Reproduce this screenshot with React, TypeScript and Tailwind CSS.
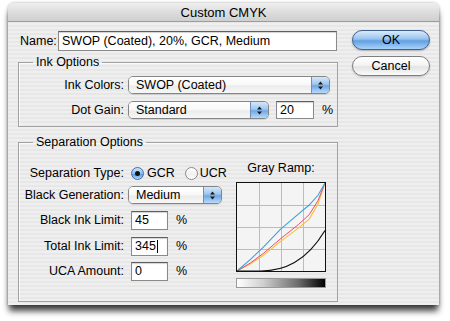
import { ReactNode } from "react";

function Arrows() {
  return (
    <svg width="7" height="11" viewBox="0 0 7 11">
      <path d="M3.5 1.5 L6 4.5 H1 Z M3.5 9.5 L6 6.5 H1 Z" fill="#1a1a1a" />
    </svg>
  );
}

function PopUp({ value, className }: { value: string; className: string }) {
  return (
    <div
      className={
        "flex h-[18px] items-stretch overflow-hidden rounded-[5px] border border-[#858585] shadow-[0_1px_1px_rgba(0,0,0,0.12)] " +
        className
      }
    >
      <div className="flex flex-1 items-center bg-[linear-gradient(180deg,#ffffff_0%,#f8f8f8_50%,#ebebeb_55%,#f7f7f7_100%)] pl-[7px]">
        {value}
      </div>
      <div className="flex w-[18px] items-center justify-center border-l border-[#6e8fb9] bg-[linear-gradient(180deg,#d4e7fa_0%,#9fc6ef_45%,#6ea8e6_55%,#b9dafa_100%)]">
        <Arrows />
      </div>
    </div>
  );
}

function Field({
  value,
  className,
  caret,
}: {
  value: string;
  className: string;
  caret?: boolean;
}) {
  return (
    <div
      className={
        "flex items-center border border-[#8a8a8a] border-t-[#5e5e5e] bg-white pl-[3px] shadow-[inset_0_1px_1px_rgba(0,0,0,0.18)] " +
        className
      }
    >
      {value}
      {caret && <span className="ml-[1px] h-[13px] w-px bg-black" />}
    </div>
  );
}

function Radio({ on }: { on?: boolean }) {
  return on ? (
    <div className="flex h-[13px] w-[13px] items-center justify-center rounded-full border border-[#4a6d99] bg-[linear-gradient(180deg,#cfe4fa_0%,#8dbdef_50%,#5f9fe3_60%,#b3d7fa_100%)]">
      <div className="h-[5px] w-[5px] rounded-full bg-[#111]" />
    </div>
  ) : (
    <div className="h-[13px] w-[13px] rounded-full border border-[#8a8a8a] bg-[linear-gradient(180deg,#ffffff_0%,#f0f0f0_60%,#ffffff_100%)]" />
  );
}

function Row({
  label,
  children,
  className,
}: {
  label: string;
  children: ReactNode;
  className: string;
}) {
  return (
    <div className={"flex items-center " + className}>
      <div className="w-[105px] shrink-0 text-right">{label}</div>
      <div className="ml-[4px] flex items-center">{children}</div>
    </div>
  );
}

function Group({
  title,
  children,
  className,
}: {
  title: string;
  children: ReactNode;
  className: string;
}) {
  return (
    <fieldset
      className={
        "border border-[#a2a2a2] shadow-[inset_1px_1px_0_rgba(255,255,255,0.7)] " +
        className
      }
    >
      <legend className="ml-[14px] px-[3px] leading-[15px]">{title}</legend>
      {children}
    </fieldset>
  );
}

function GrayRamp() {
  const X = (v: number) => 1 + 88 * v;
  const Y = (v: number) => 89 - 88 * v;
  const pts = (a: [number, number][]) =>
    a.map(([x, y]) => X(x).toFixed(1) + "," + Y(y).toFixed(1)).join(" ");
  return (
    <svg width="90" height="90" viewBox="0 0 90 90" className="block">
      <rect x="0" y="0" width="90" height="90" fill="#f4f4f4" />
      {[23, 45, 67].map((p) => (
        <g key={p}>
          <line x1={p + 0.5} y1="1" x2={p + 0.5} y2="89" stroke="#bcbcbc" />
          <line x1="1" y1={p + 0.5} x2="89" y2={p + 0.5} stroke="#bcbcbc" />
        </g>
      ))}
      <polyline
        points={pts([[0, 0], [0.15, 0.08], [0.3, 0.18], [0.5, 0.34], [0.7, 0.49], [0.82, 0.59], [0.92, 0.76], [1, 1]])}
        fill="none"
        stroke="#f5c445"
        strokeWidth="1.2"
      />
      <polyline
        points={pts([[0, 0], [0.15, 0.09], [0.3, 0.2], [0.5, 0.37], [0.7, 0.53], [0.82, 0.64], [0.92, 0.8], [1, 1]])}
        fill="none"
        stroke="#ee4a6a"
        strokeWidth="1"
      />
      <polyline
        points={pts([[0, 0], [0.15, 0.13], [0.3, 0.27], [0.49, 0.47], [0.7, 0.65], [0.82, 0.75], [0.92, 0.86], [1, 1]])}
        fill="none"
        stroke="#3f9fdd"
        strokeWidth="1.1"
      />
      <path
        d="M1,89 L24.8,89 C48,89 70,80 89,48.5"
        fill="none"
        stroke="#111"
        strokeWidth="1.2"
      />
      <rect x="0.5" y="0.5" width="89" height="89" fill="none" stroke="#111" />
    </svg>
  );
}

export default function App() {
  return (
    <div className="h-[321px] w-[450px] overflow-hidden bg-white pl-[8px] pt-[3px] font-['Liberation_Sans',Arial,sans-serif] text-[12.5px] leading-[15px] text-black">
      <div className="h-[302px] w-[431px] rounded-t-[6px] bg-[repeating-linear-gradient(180deg,#efefef_0px,#efefef_2px,#e7e7e7_2px,#e7e7e7_4px)] shadow-[0_0_3px_rgba(0,0,0,0.35),0_7px_6px_-1px_rgba(0,0,0,0.75)]">
        <div className="flex h-[19px] items-center justify-center rounded-t-[6px] border-b border-[#9c9c9c] bg-[linear-gradient(180deg,#eeeeee_0%,#dcdcdc_55%,#cfcfcf_100%)] text-[13px]">
          Custom CMYK
        </div>

        <div className="flex pl-[10px] pt-[8px]">
          <div className="w-[320px]">
            <div className="mt-[1px] flex h-[20px] items-center pl-[2px] pr-[1px]">
              <span>Name:</span>
              <Field
                value="SWOP (Coated), 20%, GCR, Medium"
                className="ml-auto h-[20px] w-[279px]"
              />
            </div>

            <Group title="Ink Options" className="mt-[4px] pb-[7px]">
              <Row label="Ink Colors:" className="mt-[6px]">
                <PopUp value="SWOP (Coated)" className="w-[202px]" />
              </Row>
              <Row label="Dot Gain:" className="mt-[7px]">
                <PopUp value="Standard" className="w-[141px]" />
                <Field value="20" className="ml-[7px] h-[18px] w-[38px]" />
                <span className="ml-[8px]">%</span>
              </Row>
            </Group>

            <Group title="Separation Options" className="mt-[8px] pb-[13px]">
              <div className="flex">
                <div className="w-[217px]">
                  <Row label="Separation Type:" className="mt-[14px] h-[18px]">
                    <div className="ml-[3px]">
                      <Radio on />
                    </div>
                    <span className="ml-[3px]">GCR</span>
                    <div className="ml-[10px]">
                      <Radio />
                    </div>
                    <span className="ml-[2px]">UCR</span>
                  </Row>
                  <Row label="Black Generation:" className="mt-[4px]">
                    <PopUp value="Medium" className="w-[94px]" />
                  </Row>
                  <Row label="Black Ink Limit:" className="mt-[7px]">
                    <Field value="45" className="ml-[3px] h-[19px] w-[37px]" />
                    <span className="ml-[8px]">%</span>
                  </Row>
                  <Row label="Total Ink Limit:" className="mt-[7px]">
                    <Field value="345" caret className="ml-[3px] h-[19px] w-[37px]" />
                    <span className="ml-[8px]">%</span>
                  </Row>
                  <Row label="UCA Amount:" className="mt-[6px]">
                    <Field value="0" className="ml-[3px] h-[19px] w-[37px]" />
                    <span className="ml-[8px]">%</span>
                  </Row>
                </div>
                <div className="flex w-[90px] flex-col items-center">
                  <div className="mt-[11px] whitespace-nowrap">Gray Ramp:</div>
                  <div className="mt-[6px]">
                    <GrayRamp />
                  </div>
                  <div className="mt-[6px] h-[10px] w-[90px] border border-[#9a9a9a] bg-[linear-gradient(90deg,#ffffff_0%,#cfcfcf_30%,#6a6a6a_70%,#000000_100%)]" />
                </div>
              </div>
            </Group>
          </div>

          <div className="ml-[14px] flex w-[78px] flex-col">
            <div className="flex h-[20px] items-center justify-center rounded-full border border-[#3f5f8d] bg-[linear-gradient(180deg,#d9ebfc_0%,#96c3f0_45%,#639fe2_55%,#a9d4fa_100%)] shadow-[0_1px_2px_rgba(0,0,0,0.25)]">
              OK
            </div>
            <div className="mt-[6px] flex h-[20px] items-center justify-center rounded-full border border-[#7e7e7e] bg-[linear-gradient(180deg,#ffffff_0%,#f4f4f4_45%,#e4e4e4_55%,#fafafa_100%)] shadow-[0_1px_2px_rgba(0,0,0,0.2)]">
              Cancel
            </div>
          </div>
        </div>
      </div>
    </div>
  );
}
